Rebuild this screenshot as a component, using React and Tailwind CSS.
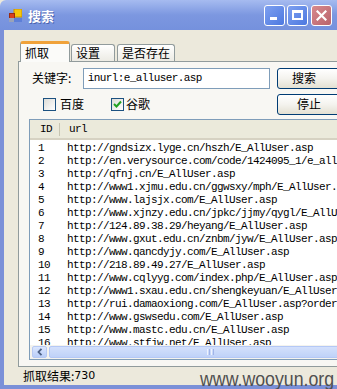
import React from "react";

const rows = [
  "http://gndsizx.lyge.cn/hszh/E_AllUser.asp",
  "http://en.verysource.com/code/1424095_1/e_alluser.asp",
  "http://qfnj.cn/E_AllUser.asp",
  "http://www1.xjmu.edu.cn/ggwsxy/mph/E_AllUser.asp",
  "http://www.lajsjx.com/E_AllUser.asp",
  "http://www.xjnzy.edu.cn/jpkc/jjmy/qygl/E_AllUser.asp",
  "http://124.89.38.29/heyang/E_AllUser.asp",
  "http://www.gxut.edu.cn/znbm/jyw/E_AllUser.asp",
  "http://www.qancdyjy.com/E_AllUser.asp",
  "http://218.89.49.27/E_AllUser.asp",
  "http://www.cqlyyg.com/index.php/E_AllUser.asp",
  "http://www1.sxau.edu.cn/shengkeyuan/E_AllUser.asp",
  "http://rui.damaoxiong.com/E_AllUser.asp?order",
  "http://www.gswsedu.com/E_AllUser.asp",
  "http://www.mastc.edu.cn/E_AllUser.asp",
  "http://www.stfjw.net/E_AllUser.asp",
];

const cjk = "font-['Noto_Sans_CJK_SC','Noto_Sans',sans-serif]";
const mono = "font-['Liberation_Mono','DejaVu_Sans_Mono',monospace] text-[11px] tracking-[-0.6px]";

function XpButton({ children, pl }) {
  return (
    <div
      className={`h-[21px] w-[80px] shrink-0 flex items-center rounded-[3px] border border-[#003c74] bg-linear-to-b from-white via-[#f4f3ee] to-[#e3e0d2] text-[12px] text-black ${cjk} ${pl}`}
    >
      {children}
    </div>
  );
}

export default function App() {
  return (
    <div className="relative w-[337px] h-[389px] overflow-hidden flex flex-col bg-[#ece9dc]">
      {/* Title bar */}
      <div className="h-[30px] shrink-0 flex items-center pl-[9px] rounded-tl-[6px] bg-linear-to-b from-[#a6bbf0] via-[#7c97e0] to-[#7591dd]">
        <svg width="13" height="13" viewBox="0 0 13 13" className="shrink-0">
          <rect x="5" y="0" width="8" height="8" fill="#f6c60a" stroke="#c99400" strokeWidth="1" />
          <rect x="0.5" y="4.5" width="5" height="5" fill="#d8401f" stroke="#9a2a10" strokeWidth="1" />
          <rect x="0" y="9" width="13" height="4" fill="#5d7fd8" />
          <rect x="0" y="9" width="5" height="4" fill="#9aa3b8" />
        </svg>
        <span className={`ml-[6px] text-[13px] font-bold text-white leading-none ${cjk} [text-shadow:1px_1px_0_#4a63b0]`}>
          搜索
        </span>
        <div className="ml-auto mr-[5px] flex items-center">
          <div className="w-[21px] h-[21px] rounded-[3px] border border-white bg-linear-to-br from-[#7ea0f0] to-[#4d78e0] flex items-end pl-[5px] pb-[5px]">
            <div className="w-[7px] h-[3px] bg-white" />
          </div>
          <div className="ml-[2px] w-[21px] h-[21px] rounded-[3px] border border-white bg-linear-to-br from-[#7ea0f0] to-[#4d78e0] flex items-center justify-center">
            <div className="w-[11px] h-[10px] border-2 border-t-[3px] border-white" />
          </div>
          <div className="ml-[3px] w-[21px] h-[21px] rounded-[3px] border border-white bg-linear-to-br from-[#d88a8e] to-[#b9636c] flex items-center justify-center">
            <svg width="11" height="11" viewBox="0 0 11 11">
              <path d="M1.5 1.5 L9.5 9.5 M9.5 1.5 L1.5 9.5" stroke="white" strokeWidth="2.2" strokeLinecap="square" />
            </svg>
          </div>
        </div>
      </div>

      {/* Body */}
      <div className="flex-1 flex flex-col border-l-4 border-b-4 border-[#7b90d8] min-h-0">
        <div className="pt-[11px] pl-[14px]">
          {/* Tab strip */}
          <div className="h-[20px] flex items-end pl-[2px]">
            <div className={`relative z-10 -mb-px w-[50px] h-[21px] rounded-t-[3px] border-x border-[#919b9c] border-t-[3px] border-t-[#f0a23a] bg-[#fbfbf9] text-[12px] text-black ${cjk} pl-[4px] leading-[17px]`}>
              抓取
            </div>
            <div className={`ml-px w-[44px] h-[17px] rounded-t-[3px] border-x border-t border-[#919b9c] bg-linear-to-b from-white to-[#ecebe4] text-[12px] text-black ${cjk} pl-[4px] leading-[16px]`}>
              设置
            </div>
            <div className={`ml-[2px] w-[58px] h-[17px] rounded-t-[3px] border-x border-t border-[#919b9c] bg-linear-to-b from-white to-[#ecebe4] text-[12px] text-black ${cjk} pl-[4px] leading-[16px]`}>
              是否存在
            </div>
          </div>

          {/* Panel */}
          <div className="h-[306px] w-[340px] border border-[#919b9c] bg-[#f8f7f3] pt-[5px] pl-[10px] flex flex-col">
            {/* Row 1 */}
            <div className="h-[22px] flex items-center ml-[3px]">
              <span className={`w-[51px] text-[12px] text-black ${cjk}`}>关键字:</span>
              <div className={`w-[188px] h-[21px] border border-[#7f9db9] bg-white flex items-center pl-[4px] text-black ${mono}`}>
                inurl:e_alluser.asp
              </div>
              <div className="ml-[7px]">
                <XpButton pl="pl-[14px]">搜索</XpButton>
              </div>
            </div>
            {/* Row 2 */}
            <div className="mt-[5px] h-[20px] flex items-center ml-[3px]">
              <div className="w-[246px] flex items-center">
                <div className="ml-[11px] w-[13px] h-[13px] border border-[#1c5180] bg-linear-to-br from-[#dcdcd7] to-white" />
                <span className={`ml-[4px] text-[12px] text-black ${cjk}`}>百度</span>
                <div className="ml-[27px] w-[13px] h-[13px] border border-[#1c5180] bg-linear-to-br from-[#dcdcd7] to-white flex items-center justify-center">
                  <svg width="9" height="9" viewBox="0 0 9 9">
                    <path d="M1 4 L3.5 6.5 L8 1.5" fill="none" stroke="#21a121" strokeWidth="2" />
                  </svg>
                </div>
                <span className={`ml-[2px] text-[12px] text-black ${cjk}`}>谷歌</span>
              </div>
              <XpButton pl="pl-[19px]">停止</XpButton>
            </div>

            {/* ListView */}
            <div className="mt-[5px] h-[241px] w-[320px] border border-[#7f9db9] bg-white flex flex-col overflow-hidden">
              <div className={`h-[20px] shrink-0 flex items-center bg-[#ebeadb] border-b-2 border-[#d6d2c2] text-black ${mono}`}>
                <div className="w-[30px] pl-[10px] h-[13px] leading-[13px] border-r border-[#c7c5b2]">ID</div>
                <div className="pl-[9px]">url</div>
              </div>
              <div className={`flex-1 min-h-0 overflow-hidden pt-[2px] text-black ${mono}`}>
                {rows.map((u, i) => (
                  <div key={i} className="h-[13px] leading-[13px] flex whitespace-nowrap">
                    <span className="w-[37px] shrink-0 pl-[8px]">{i + 1}</span>
                    <span>{u}</span>
                  </div>
                ))}
              </div>
              <div className="h-[14px] shrink-0 flex items-stretch bg-[#f4f3ee] py-px">
                <div className="ml-[2px] w-[15px] rounded-[2px] border border-[#b7c9f3] bg-linear-to-b from-[#dbe6fe] to-[#b9cdf8] flex items-center justify-center">
                  <svg width="6" height="8" viewBox="0 0 6 8">
                    <path d="M4.5 0.8 L1.5 4 L4.5 7.2" fill="none" stroke="#4d6185" strokeWidth="1.8" />
                  </svg>
                </div>
                <div className="ml-[2px] flex-1 rounded-[2px] border border-[#b4c8f6] bg-linear-to-b from-[#d3e0fc] to-[#bfd2f8] flex items-center pl-[157px]">
                  <div className="flex gap-[1px]">
                    <div className="w-px h-[6px] bg-[#eef3fe]" />
                    <div className="w-px h-[6px] bg-[#9fb4e8]" />
                    <div className="w-px h-[6px] bg-[#eef3fe]" />
                    <div className="w-px h-[6px] bg-[#9fb4e8]" />
                  </div>
                </div>
              </div>
            </div>
          </div>
        </div>

        {/* Status */}
        <div className={`h-[18px] flex items-center pl-[19px] text-[12px] text-black ${cjk}`}>
          抓取结果:<span className="font-['DejaVu_Sans',sans-serif] text-[11px]">730</span>
        </div>
      </div>

      {/* Watermark */}
      <div className="absolute left-[200px] top-[368px] origin-left scale-x-[0.845] text-[21px] leading-[21px] text-[#505050] font-['Liberation_Sans',Arial,sans-serif] whitespace-nowrap">
        www.wooyun.org
      </div>
    </div>
  );
}
